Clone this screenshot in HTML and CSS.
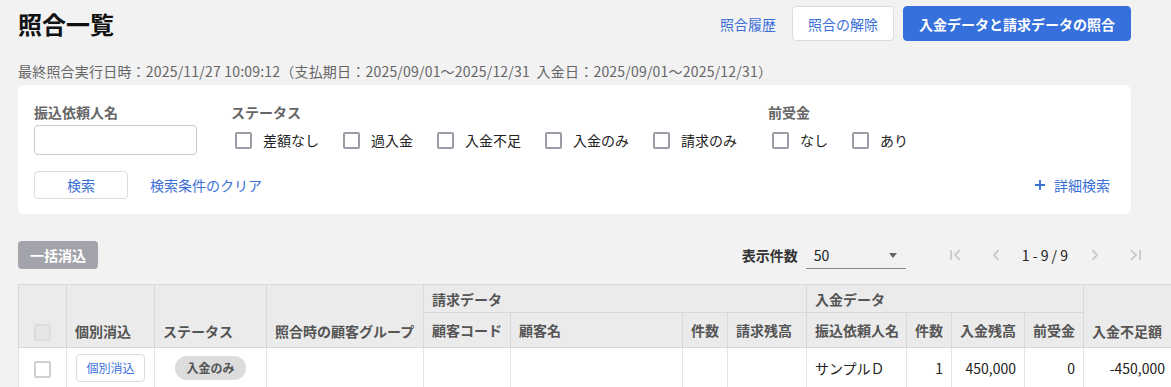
FILE: index.html
```html
<!DOCTYPE html>
<html lang="ja">
<head>
  <meta charset="utf-8">
  <link rel="stylesheet" href="styles.css">
</head>
<body>
  <div class="page">
    <div class="topbar">
      <h1 class="title">照合一覧</h1>
      <div class="top-actions">
        <a href="#" class="link history-link">照合履歴</a>
        <button class="btn">照合の解除</button>
        <button class="btn btn-primary">入金データと請求データの照合</button>
      </div>
    </div>

    <div class="meta">最終照合実行日時：2025/11/27 10:09:12（支払期日：2025/09/01～2025/12/31&nbsp; 入金日：2025/09/01～2025/12/31）</div>

    <div class="filter">
      <div class="filter-row">
        <div class="field field-name">
          <div class="field-label">振込依頼人名</div>
          <input type="text" class="text-input">
        </div>
        <div class="field field-status">
          <div class="field-label">ステータス</div>
          <div class="checks">
            <label class="check"><span class="box"></span>差額なし</label>
            <label class="check"><span class="box"></span>過入金</label>
            <label class="check"><span class="box"></span>入金不足</label>
            <label class="check"><span class="box"></span>入金のみ</label>
            <label class="check"><span class="box"></span>請求のみ</label>
          </div>
        </div>
        <div class="field">
          <div class="field-label">前受金</div>
          <div class="checks">
            <label class="check"><span class="box"></span>なし</label>
            <label class="check"><span class="box"></span>あり</label>
          </div>
        </div>
      </div>
      <div class="filter-actions">
        <button class="btn btn-small">検索</button>
        <a href="#" class="link clear-link">検索条件のクリア</a>
        <a href="#" class="link detail-link">
          <svg width="12" height="12" viewBox="0 0 12 12"><path d="M6 1v10M1 6h10" stroke="currentColor" stroke-width="1.8" fill="none"/></svg>
          詳細検索
        </a>
      </div>
    </div>

    <div class="toolbar">
      <button class="btn-bulk">一括消込</button>
      <div class="per-page">
        <span class="per-page-label">表示件数</span>
        <div class="select">50<span class="caret"></span></div>
      </div>
      <div class="pager">
        <span class="pager-btn">
          <svg width="14" height="12" viewBox="0 0 14 12"><path d="M2 1v10M11 1L6 6l5 5" stroke="currentColor" stroke-width="1.6" fill="none"/></svg>
        </span>
        <span class="pager-btn">
          <svg width="10" height="12" viewBox="0 0 10 12"><path d="M7.5 1L3 6l4.5 5" stroke="currentColor" stroke-width="1.6" fill="none"/></svg>
        </span>
        <span class="pager-text">1 - 9 / 9</span>
        <span class="pager-btn">
          <svg width="10" height="12" viewBox="0 0 10 12"><path d="M2.5 1L7 6l-4.5 5" stroke="currentColor" stroke-width="1.6" fill="none"/></svg>
        </span>
        <span class="pager-btn">
          <svg width="14" height="12" viewBox="0 0 14 12"><path d="M3 1l5 5-5 5M12 1v10" stroke="currentColor" stroke-width="1.6" fill="none"/></svg>
        </span>
      </div>
    </div>

    <div class="table-wrap">
      <table class="match-table">
        <colgroup>
          <col style="width: 48px">
          <col style="width: 88px">
          <col style="width: 112px">
          <col style="width: 157px">
          <col style="width: 87px">
          <col style="width: 172px">
          <col style="width: 45px">
          <col style="width: 79px">
          <col style="width: 100px">
          <col style="width: 45px">
          <col style="width: 73px">
          <col style="width: 59px">
          <col style="width: 90px">
        </colgroup>
        <thead>
          <tr class="head-group">
            <th rowspan="2" class="th-tall center"><span class="box box-disabled"></span></th>
            <th rowspan="2" class="th-tall">個別消込</th>
            <th rowspan="2" class="th-tall">ステータス</th>
            <th rowspan="2" class="th-tall">照合時の顧客グループ</th>
            <th colspan="4">請求データ</th>
            <th colspan="4">入金データ</th>
            <th rowspan="2" class="th-tall">入金不足額</th>
          </tr>
          <tr class="head-cols">
            <th>顧客コード</th>
            <th>顧客名</th>
            <th>件数</th>
            <th>請求残高</th>
            <th>振込依頼人名</th>
            <th>件数</th>
            <th>入金残高</th>
            <th>前受金</th>
          </tr>
        </thead>
        <tbody>
          <tr>
            <td class="center"><span class="box box-row"></span></td>
            <td class="center"><button class="btn-row">個別消込</button></td>
            <td class="center"><span class="chip">入金のみ</span></td>
            <td></td>
            <td></td>
            <td></td>
            <td></td>
            <td></td>
            <td>サンプルＤ</td>
            <td class="num">1</td>
            <td class="num">450,000</td>
            <td class="num">0</td>
            <td class="num">-450,000</td>
          </tr>
        </tbody>
      </table>
    </div>
  </div>
</body>
</html>
```

FILE: styles.css
```css
* {
  box-sizing: border-box;
}

body {
  margin: 0;
  background: #f2f2f2;
  font-family: "Noto Sans CJK JP", "Noto Sans", sans-serif;
  font-size: 14px;
  color: #222;
  overflow: hidden;
}

.page {
  padding: 6px 0 0 18px;
}

.topbar {
  width: 1113px;
  height: 35px;
  display: flex;
  align-items: center;
}

.title {
  margin: 0;
  font-size: 24px;
  font-weight: 700;
  line-height: 35px;
  color: #111;
}

.top-actions {
  margin-left: auto;
  display: flex;
  align-items: center;
  gap: 9px;
}

.link {
  color: #3a6fd8;
  text-decoration: none;
  font-size: 14px;
}

.history-link {
  margin-right: 7px;
}

.btn {
  height: 35px;
  padding: 0 15px;
  border: 1px solid #dcdcdc;
  border-radius: 4px;
  background: #fff;
  color: #3a6fd8;
  font-family: inherit;
  font-size: 14px;
}

.btn-primary {
  background: #3570dc;
  border-color: #3570dc;
  color: #fff;
  font-weight: 700;
}

.meta {
  margin: 20px 0 4px;
  line-height: 20px;
  color: #666;
  letter-spacing: 0.2px;
}

.filter {
  width: 1113px;
  background: #fff;
  border-radius: 6px;
  padding: 16px 16px 15px;
}

.filter-row {
  display: flex;
}

.field-label {
  font-weight: 700;
  color: #666;
  line-height: 22px;
  margin-bottom: 2px;
}

.field-name {
  margin-right: 34px;
}

.field-status {
  margin-right: 31px;
}

.text-input {
  display: block;
  width: 163px;
  height: 30px;
  border: 1px solid #c8c8c8;
  border-radius: 4px;
}

.checks {
  display: flex;
  height: 30px;
  align-items: center;
  gap: 20px;
}

.check {
  display: flex;
  align-items: center;
  gap: 11px;
  padding-left: 4px;
  color: #222;
}

.box {
  display: inline-block;
  width: 17px;
  height: 17px;
  border: 2px solid #9c9ca6;
  border-radius: 2px;
  background: #fff;
}

.filter-actions {
  display: flex;
  align-items: center;
  margin-top: 16px;
}

.btn-small {
  width: 94px;
  height: 28px;
  padding: 0;
}

.clear-link {
  margin-left: 22px;
}

.detail-link {
  margin-left: auto;
  margin-right: 5px;
  display: flex;
  align-items: center;
  gap: 8px;
}

.toolbar {
  width: 1137px;
  height: 28px;
  margin-top: 27px;
  display: flex;
  align-items: center;
}

.btn-bulk {
  height: 28px;
  padding: 0 12px;
  border: 0;
  border-radius: 4px;
  background: #a3a3ab;
  color: #fff;
  font-family: inherit;
  font-size: 14px;
  font-weight: 700;
}

.per-page {
  margin-left: auto;
  display: flex;
  align-items: center;
  gap: 8px;
}

.per-page-label {
  font-weight: 700;
  color: #333;
}

.select {
  position: relative;
  width: 100px;
  height: 28px;
  line-height: 28px;
  padding-left: 8px;
  border-bottom: 1px solid #888;
  color: #222;
}

.caret {
  position: absolute;
  right: 9px;
  top: 12px;
  border-left: 4px solid transparent;
  border-right: 4px solid transparent;
  border-top: 5px solid #666;
}

.pager {
  display: flex;
  align-items: center;
  margin-left: 30px;
}

.pager-btn {
  width: 40px;
  height: 28px;
  display: flex;
  align-items: center;
  justify-content: center;
  color: #c4c4c4;
}

.pager-text {
  margin: 0 7px 0 6px;
  color: #222;
}

.table-wrap {
  margin-top: 15px;
  overflow: hidden;
}

.match-table {
  width: 1155px;
  table-layout: fixed;
  border-collapse: collapse;
}

.match-table th {
  background: #ebebeb;
  border: 1px solid #d9d9d9;
  color: #555;
  font-weight: 700;
  text-align: left;
  padding: 0 8px;
  line-height: 20px;
  white-space: nowrap;
  overflow: hidden;
}

.head-group th {
  height: 28px;
}

.head-cols th {
  height: 35px;
}

.match-table .th-tall {
  vertical-align: bottom;
  padding-bottom: 6px;
}

.match-table td {
  background: #fff;
  border: 1px solid #e4e4e4;
  height: 40px;
  padding: 0 8px;
  white-space: nowrap;
}

.match-table .center {
  text-align: center;
}

.match-table .num {
  text-align: right;
}

.match-table .box {
  vertical-align: middle;
}

.box-disabled {
  background: #e6e6e6;
  border-color: #dcdcdc;
}

.box-row {
  border-color: #cfcfcf;
}

.btn-row {
  height: 28px;
  padding: 0 9px;
  border: 1px solid #dcdcdc;
  border-radius: 4px;
  background: #fff;
  color: #3a6fd8;
  font-family: inherit;
  font-size: 12px;
}

.chip {
  display: inline-block;
  height: 24px;
  line-height: 24px;
  padding: 0 11px;
  border-radius: 12px;
  background: #dcdcdc;
  color: #555;
  font-size: 12px;
  font-weight: 700;
}
```
